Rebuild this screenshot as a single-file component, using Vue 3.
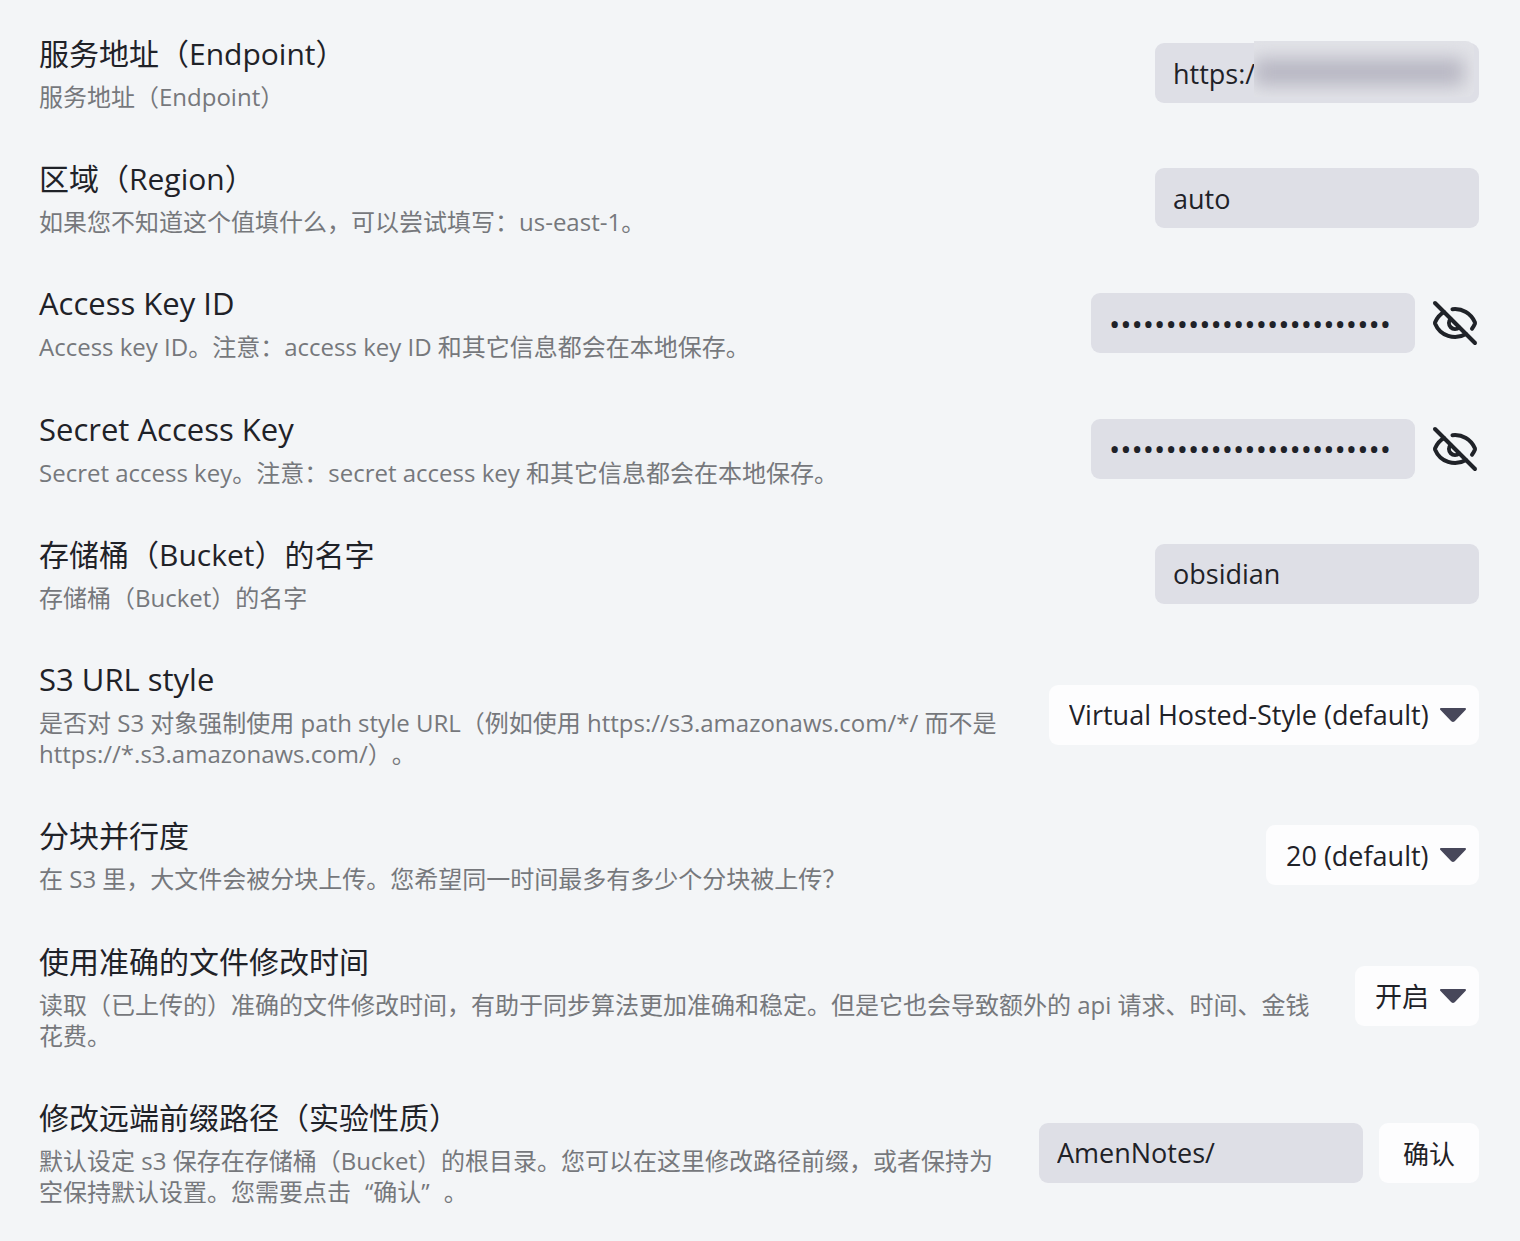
<script setup>
import { reactive } from 'vue'

const settings = reactive([
  { id: 'endpoint', name: '服务地址（Endpoint）', desc: '服务地址（Endpoint）', type: 'text', value: 'https:/', masked: true },
  { id: 'region', name: '区域（Region）', desc: '如果您不知道这个值填什么，可以尝试填写：us-east-1。', type: 'text', value: 'auto' },
  { id: 'access-key', name: 'Access Key ID', lang: 'en', desc: 'Access key ID。注意：access key ID 和其它信息都会在本地保存。', type: 'secret', value: 'x'.repeat(25), shown: false },
  { id: 'secret-key', name: 'Secret Access Key', lang: 'en', desc: 'Secret access key。注意：secret access key 和其它信息都会在本地保存。', type: 'secret', value: 'x'.repeat(25), shown: false },
  { id: 'bucket', name: '存储桶（Bucket）的名字', desc: '存储桶（Bucket）的名字', type: 'text', value: 'obsidian' },
  { id: 'url-style', name: 'S3 URL style', lang: 'en', desc: '是否对 S3 对象强制使用 path style URL（例如使用 https://s3.amazonaws.com/*/ 而不是 https://*.s3.amazonaws.com/）。', type: 'select', value: 'Virtual Hosted-Style (default)' },
  { id: 'parts', name: '分块并行度', desc: '在 S3 里，大文件会被分块上传。您希望同一时间最多有多少个分块被上传？', type: 'select', value: '20 (default)' },
  { id: 'mtime', name: '使用准确的文件修改时间', desc: '读取（已上传的）准确的文件修改时间，有助于同步算法更加准确和稳定。但是它也会导致额外的 api 请求、时间、金钱花费。', type: 'select', value: '开启' },
  { id: 'prefix', name: '修改远端前缀路径（实验性质）', desc: '默认设定 s3 保存在存储桶（Bucket）的根目录。您可以在这里修改路径前缀，或者保持为空保持默认设置。您需要点击“确认”。', type: 'text', value: 'AmenNotes/', action: '确认' },
])

const runs = (text) => text.split(/(“[^”]*”)/).filter(Boolean)
</script>

<template>
  <main class="settings">
    <section v-for="s in settings" :key="s.id" class="item">
      <div class="info">
        <label class="name" :for="s.id" :lang="s.lang || 'zh-CN'">{{ s.name }}</label>
        <p :id="s.id + '-desc'" class="desc"><span v-for="(run, i) in runs(s.desc)" :key="i" :class="{ quoted: run[0] === '“' }">{{ run }}</span></p>
      </div>
      <div class="control">
        <select v-if="s.type === 'select'" :id="s.id" v-model="s.value" class="dropdown" :aria-describedby="s.id + '-desc'">
          <option>{{ s.value }}</option>
        </select>
        <div v-else class="field">
          <input
            :id="s.id"
            v-model="s.value"
            class="input"
            :type="s.type === 'secret' && !s.shown ? 'password' : 'text'"
            :aria-describedby="s.id + '-desc'"
            spellcheck="false"
          />
          <span v-if="s.masked" class="mask"></span>
        </div>
        <button v-if="s.type === 'secret'" class="eye" type="button" aria-label="显示或隐藏" @click="s.shown = !s.shown">
          <svg viewBox="0 0 24 24" fill="none" stroke="currentColor" stroke-width="2" stroke-linecap="round" stroke-linejoin="round">
            <path d="M10.733 5.076a10.744 10.744 0 0 1 11.205 6.575 1 1 0 0 1 0 .696 10.747 10.747 0 0 1-1.444 2.49" />
            <path d="M14.084 14.158a3 3 0 0 1-4.242-4.242" />
            <path d="M17.479 17.499a10.75 10.75 0 0 1-15.417-5.151 1 1 0 0 1 0-.696 10.75 10.75 0 0 1 4.446-5.143" />
            <path d="m2 2 20 20" />
          </svg>
        </button>
        <button v-if="s.action" class="button" type="button">{{ s.action }}</button>
      </div>
    </section>
  </main>
</template>

<style>
body {
  margin: 0;
  background: #f3f5f7;
}
</style>

<style scoped>
.settings {
  display: flex;
  flex-direction: column;
  gap: 47px;
  padding: 34px 41px 32px 39px;
  color: #1f2228;
  font-family: "Open Sans", "Noto Sans CJK SC", sans-serif;
  text-spacing-trim: space-all;
}
.item {
  display: flex;
  align-items: center;
  gap: 24px;
}
.info {
  flex: 1;
  min-width: 0;
}
.name {
  display: block;
  margin-bottom: 8px;
  font-size: 30px;
  line-height: 39px;
}
.name:lang(en) {
  font-size: 31px;
}
.desc {
  margin: 0;
  color: #76787c;
  font-size: 24px;
  line-height: 1.3;
}
.quoted {
  padding: 0 14px;
}
.control {
  display: flex;
  align-items: center;
  gap: 16px;
}
.field {
  position: relative;
}
.input,
.dropdown,
.button {
  box-sizing: border-box;
  height: 60px;
  border: 0;
  border-radius: 9px;
  color: inherit;
  font-family: inherit;
  font-size: 27px;
}
.input {
  display: block;
  width: 324px;
  padding: 0 18px;
  background: #dedfe6;
}
.input[type="password"] {
  font-size: 30px;
}
.mask {
  position: absolute;
  top: -2px;
  right: 5px;
  width: 220px;
  height: 56px;
  overflow: hidden;
  border-radius: 0 8px 8px 0;
  background: #e2e3e8;
}
.mask::before {
  content: "";
  position: absolute;
  inset: 17px 10px 11px 0;
  background: #b8b7c3;
  filter: blur(9px);
}
.dropdown {
  appearance: none;
  padding: 0 50px 0 20px;
  background: #fdfdfe url("data:image/svg+xml,%3Csvg xmlns='http://www.w3.org/2000/svg' viewBox='0 0 26 14'%3E%3Cpath d='M1 1h24L14 12.500q-1 .9-2 0z' fill='%2347475a' stroke='%2347475a' stroke-width='2' stroke-linejoin='round'/%3E%3C/svg%3E") no-repeat right 13px center / 26px 14px;
}
.button {
  padding: 0 24px;
  background: #fdfdfe;
  font-size: 26px;
}
.eye {
  display: flex;
  padding: 0;
  border: 0;
  background: none;
  color: #1f2228;
}
.eye svg {
  width: 48px;
  height: 48px;
}
</style>
